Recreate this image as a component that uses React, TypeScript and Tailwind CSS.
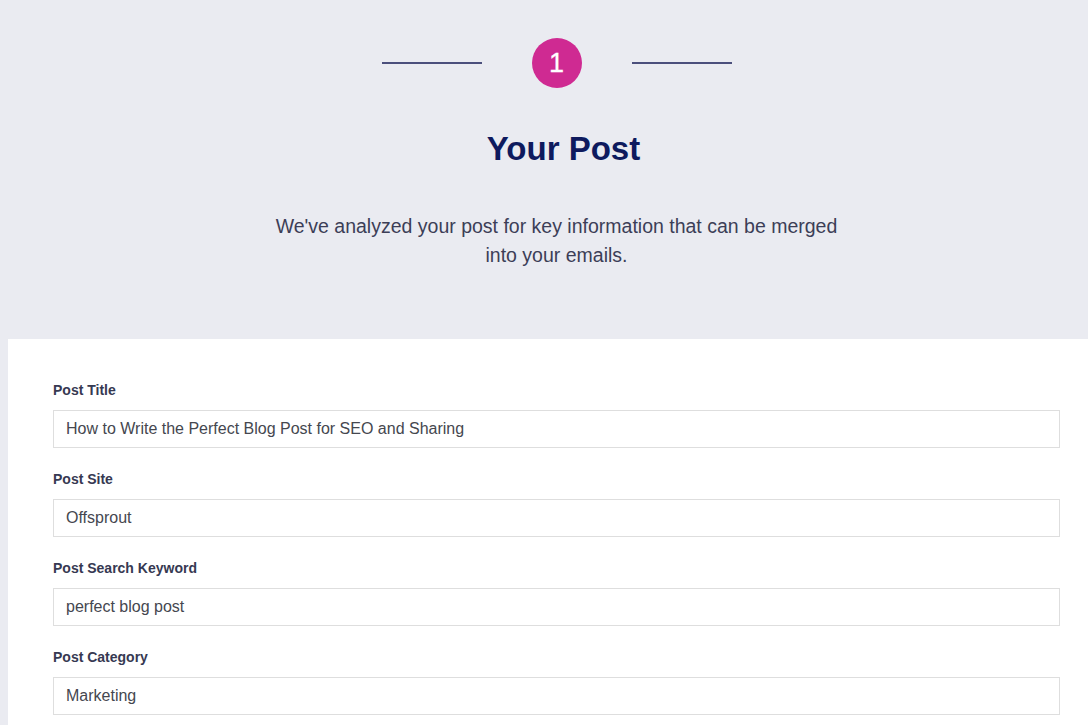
const FIELDS = [
  { label: "Post Title", value: "How to Write the Perfect Blog Post for SEO and Sharing" },
  { label: "Post Site", value: "Offsprout" },
  { label: "Post Search Keyword", value: "perfect blog post" },
  { label: "Post Category", value: "Marketing" },
]

export default function App() {
  return (
    <div
      className="min-h-[725px] w-full overflow-hidden bg-[#eaebf1]"
      style={{ fontFamily: '"Liberation Sans", Arial, sans-serif' }}
    >
      <div className="ml-[8px] w-[1097px]">
        {/* header */}
        <div className="flex flex-col items-center pt-[38px]">
          <div className="flex items-center gap-[50px]">
            <div className="h-[2px] w-[100px] bg-[#4b4f7c]" />
            <div className="flex h-[50px] w-[50px] items-center justify-center rounded-full bg-[#cf2a92] text-[27px] leading-none text-white [-webkit-text-stroke:0.3px_white]">
              1
            </div>
            <div className="h-[2px] w-[100px] bg-[#4b4f7c]" />
          </div>
          <h1 className="mt-[41px] pl-[14px] text-[33px] font-bold leading-[40px] text-[#0e1a5e]">Your Post</h1>
          <p className="mt-[43px] w-[590px] text-center text-[19.5px] leading-[29px] text-[#3c3e57]">
            We've analyzed your post for key information that can be merged into your emails.
          </p>
        </div>

        {/* form panel */}
        <div className="mt-[69px] bg-white pb-[20px] pl-[45px] pr-[45px] pt-[43px]">
          {FIELDS.map((f) => (
            <div key={f.label} className="mb-[23px]">
              <label className="block text-[14px] font-bold leading-[16px] text-[#363952]">{f.label}</label>
              <div className="mt-[12px] flex h-[38px] items-center border border-[#dedede] bg-white px-[12px] text-[16px] text-[#45474f]">
                {f.value}
              </div>
            </div>
          ))}
        </div>
      </div>
    </div>
  )
}
